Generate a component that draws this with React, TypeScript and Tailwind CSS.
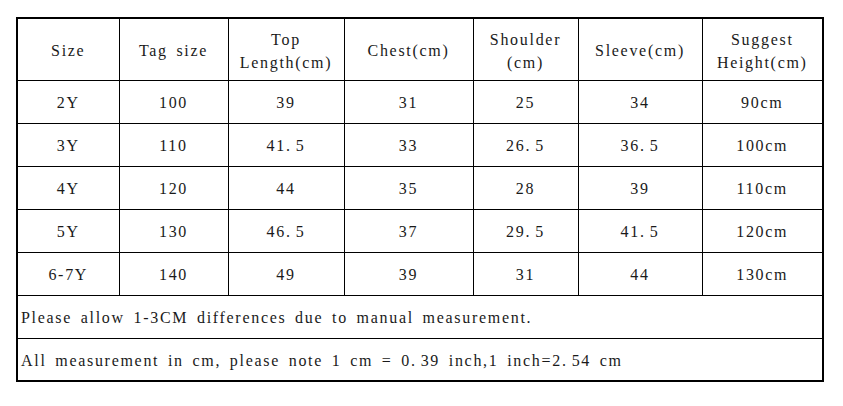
const headers: string[][] = [
  ["Size"],
  ["Tag size"],
  ["Top", "Length(cm)"],
  ["Chest(cm)"],
  ["Shoulder", "(cm)"],
  ["Sleeve(cm)"],
  ["Suggest", "Height(cm)"],
];

const rows: string[][] = [
  ["2Y", "100", "39", "31", "25", "34", "90cm"],
  ["3Y", "110", "41.5", "33", "26.5", "36.5", "100cm"],
  ["4Y", "120", "44", "35", "28", "39", "110cm"],
  ["5Y", "130", "46.5", "37", "29.5", "41.5", "120cm"],
  ["6-7Y", "140", "49", "39", "31", "44", "130cm"],
];

const widths = ["w-[102px]", "w-[109px]", "w-[116px]", "w-[129px]", "w-[105px]", "w-[124px]", "w-[121px]"];

// SimSun-style wide period: "41.5" reads as "41. 5"
function Num({ v }: { v: string }) {
  const parts = v.split(".");
  if (parts.length < 2) return <>{v}</>;
  return (
    <>
      {parts[0]}
      <span className="mr-[4px]">.</span>
      {parts[1]}
    </>
  );
}

export default function App() {
  return (
    <div className="w-[843px] h-[406px] bg-white pt-[17px] pl-[16px] font-['Liberation_Serif',serif] text-[16px] tracking-[1.7px] [word-spacing:3px] text-[#1a1a1a]">
      <table className="border-collapse border-2 border-black table-fixed w-[807px]">
        <colgroup>
          {widths.map((w, i) => (
            <col key={i} className={w} />
          ))}
        </colgroup>
        <tbody>
          <tr className="h-[62px]">
            {headers.map((h, i) => (
              <td key={i} className="border border-black text-center align-middle leading-[23px] pt-[3px]">
                {h.map((line, j) => (
                  <div key={j}>{line}</div>
                ))}
              </td>
            ))}
          </tr>
          {rows.map((r, i) => (
            <tr key={i} className="h-[43px]">
              {r.map((c, j) => (
                <td key={j} className="border border-black text-center align-middle pt-[3px]">
                  <Num v={c} />
                </td>
              ))}
            </tr>
          ))}
          <tr className="h-[43px]">
            <td colSpan={7} className="border border-black pl-[3px] pt-[3px] align-middle">
              Please allow 1-3CM differences due to manual measurement.
            </td>
          </tr>
          <tr className="h-[43px]">
            <td colSpan={7} className="border border-black pl-[3px] pt-[3px] align-middle">
              All measurement in cm, please note 1 cm = 0<span className="mr-[4px]">.</span>39 inch,1 inch=2<span className="mr-[4px]">.</span>54 cm
            </td>
          </tr>
        </tbody>
      </table>
    </div>
  );
}
